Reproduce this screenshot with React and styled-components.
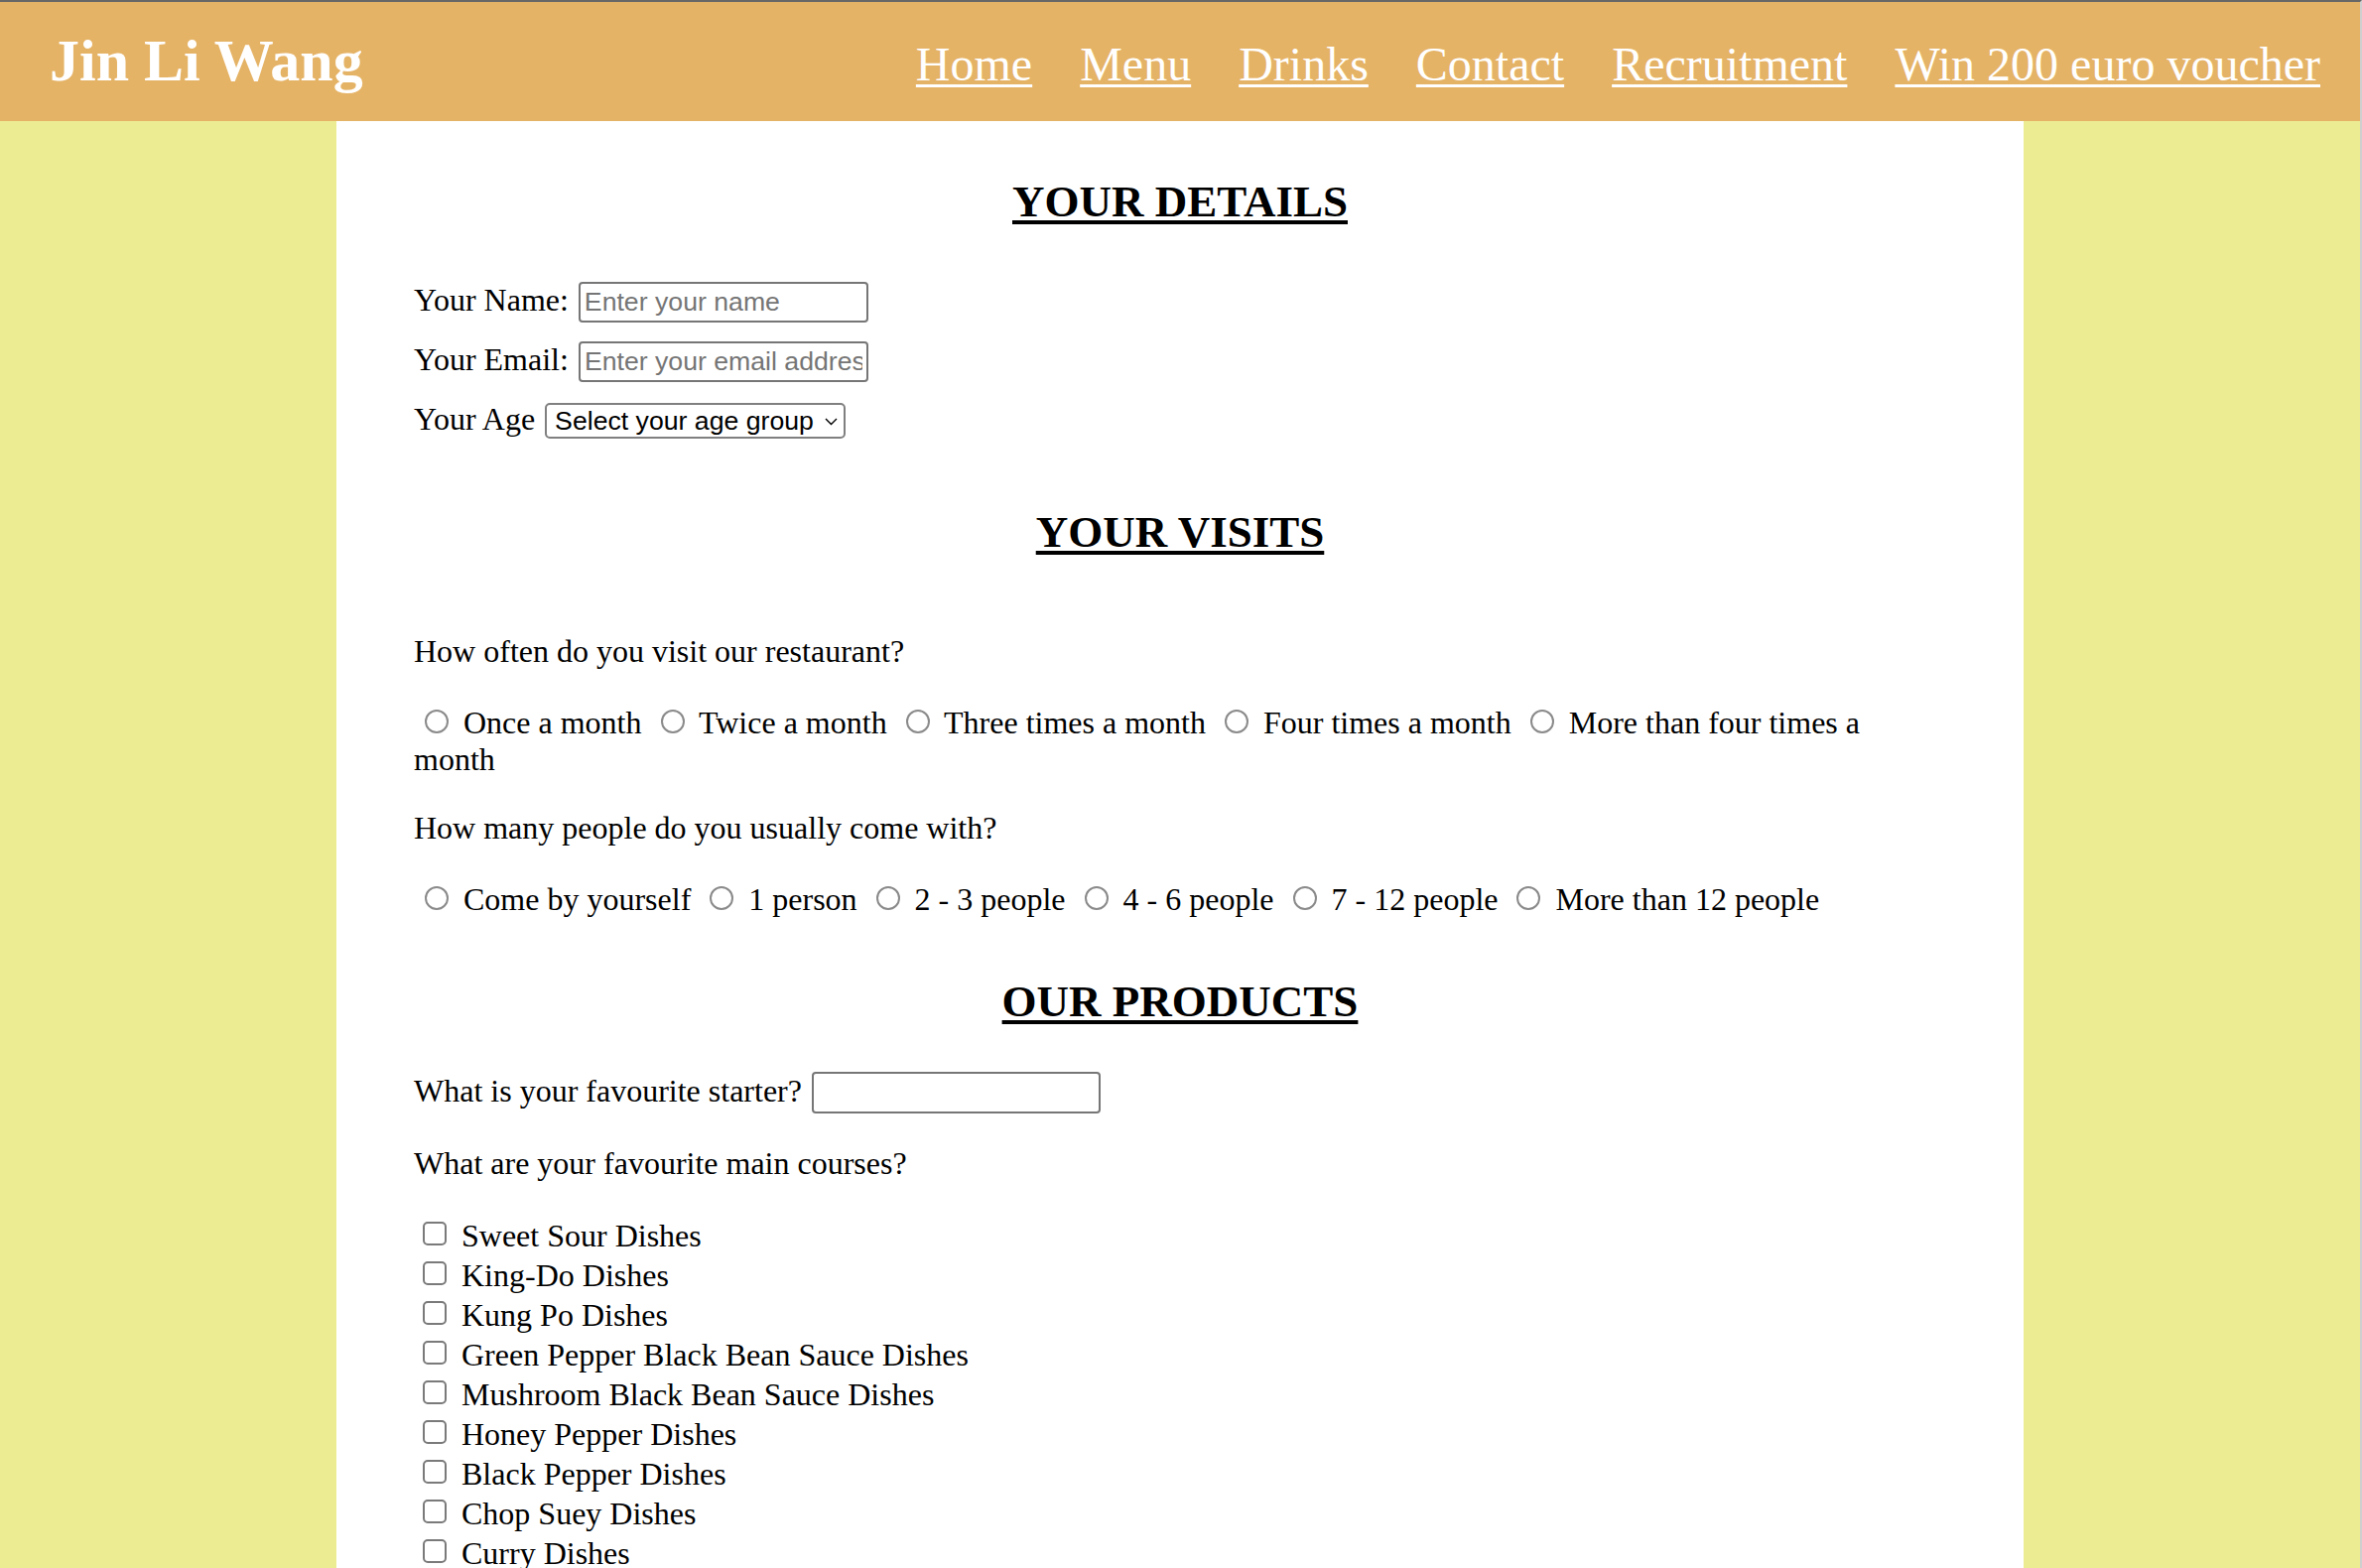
import React from "react";
import styled, { createGlobalStyle } from "styled-components";

const GlobalStyle = createGlobalStyle`
  html, body {
    margin: 0;
    padding: 0;
  }
  body {
    background: #ecec92;
    font-family: "Liberation Serif", "Times New Roman", serif;
    color: #000;
  }
`;

const Page = styled.div`
  min-height: 100vh;
  box-sizing: border-box;
  border-top: 2px solid #676767;
  border-right: 2px solid #cfcfcf;
  background: #ecec92;
`;

const Header = styled.header`
  display: flex;
  align-items: baseline;
  justify-content: space-between;
  height: 120px;
  box-sizing: border-box;
  padding: 23px 40px 0 50px;
  background: #e5b366;
`;

const Logo = styled.div`
  font-size: 60px;
  line-height: 1.2;
  font-weight: bold;
  color: #fff;
`;

const Nav = styled.nav`
  display: flex;
  align-items: baseline;
  gap: 48px;
`;

const NavLink = styled.a`
  font-size: 48px;
  line-height: 1.2;
  color: #fff;
  text-decoration: underline;
  text-decoration-thickness: 3px;
  text-underline-offset: 4px;
  cursor: pointer;
`;

const Main = styled.main`
  width: 1700px;
  min-height: calc(100vh - 122px);
  margin: 0 auto;
  padding: 55px 78px 40px;
  box-sizing: border-box;
  background: #fff;
`;

const Heading = styled.h2`
  margin: ${(p) => p.$top}px 0 ${(p) => p.$bottom}px;
  font-size: 45px;
  line-height: 52px;
  font-weight: bold;
  text-align: center;
  text-decoration: underline;
  text-decoration-thickness: 4px;
  text-underline-offset: 4px;
`;

const FieldRow = styled.div`
  display: flex;
  align-items: baseline;
  gap: 10px;
  margin-bottom: ${(p) => (p.$last ? 0 : 19)}px;
`;

const Label = styled.label`
  font-size: 32px;
  line-height: 37px;
`;

const TextInput = styled.input`
  width: ${(p) => p.$w || 292}px;
  height: ${(p) => p.$h || 41}px;
  box-sizing: border-box;
  padding: 0 4px;
  border: 2px solid #767676;
  border-radius: 4px;
  font-family: "Liberation Sans", Arial, sans-serif;
  font-size: 26.67px;
  color: #000;
  background: #fff;
  outline: none;

  &::placeholder {
    color: #757575;
  }
`;

const SelectWrap = styled.span`
  position: relative;
  display: inline-flex;
`;

const Select = styled.select`
  appearance: none;
  width: 303px;
  height: 36px;
  box-sizing: border-box;
  padding: 0 30px 0 8px;
  border: 2px solid #808080;
  border-radius: 5px;
  background: #fff;
  font-family: "Liberation Sans", Arial, sans-serif;
  font-size: 26.67px;
  color: #000;
  outline: none;
`;

const Chevron = styled.svg`
  position: absolute;
  right: 8px;
  top: 50%;
  width: 13px;
  height: 8px;
  margin-top: -3px;
  pointer-events: none;
`;

const Question = styled.p`
  margin: ${(p) => p.$top || 0}px 0 0;
  font-size: 32px;
  line-height: 37px;
`;

const Options = styled.p`
  max-width: 1500px;
  margin: 33px 0 0;
  font-size: 32px;
  line-height: 37px;
`;

const Radio = styled.input`
  appearance: none;
  display: inline-block;
  width: 24px;
  height: 24px;
  margin: 7px 7px 0 11px;
  box-sizing: border-box;
  border: 2px solid #8a8a8a;
  border-radius: 50%;
  background: #fff;
  vertical-align: baseline;
`;

const CheckList = styled.div`
  margin-top: 34px;
`;

const CheckRow = styled.div`
  display: flex;
  align-items: center;
  height: 40px;
`;

const Checkbox = styled.input`
  appearance: none;
  flex-shrink: 0;
  width: 24px;
  height: 24px;
  margin: 0 15px 4px 9px;
  box-sizing: border-box;
  border: 2px solid #7a7a7a;
  border-radius: 5px;
  background: #fff;
`;

const CheckLabel = styled.label`
  font-size: 32px;
  line-height: 40px;
`;

const links = ["Home", "Menu", "Drinks", "Contact", "Recruitment", "Win 200 euro voucher"];

const visitOptions = [
  "Once a month",
  "Twice a month",
  "Three times a month",
  "Four times a month",
  "More than four times a month",
];

const groupOptions = [
  "Come by yourself",
  "1 person",
  "2 - 3 people",
  "4 - 6 people",
  "7 - 12 people",
  "More than 12 people",
];

const dishes = [
  "Sweet Sour Dishes",
  "King-Do Dishes",
  "Kung Po Dishes",
  "Green Pepper Black Bean Sauce Dishes",
  "Mushroom Black Bean Sauce Dishes",
  "Honey Pepper Dishes",
  "Black Pepper Dishes",
  "Chop Suey Dishes",
  "Curry Dishes",
];

const RadioGroup = ({ name, options }) => (
  <Options>
    {options.map((opt, i) => (
      <React.Fragment key={opt}>
        <Radio type="radio" name={name} id={`${name}-${i}`} />{" "}
        <label htmlFor={`${name}-${i}`}>{opt}</label>{" "}
      </React.Fragment>
    ))}
  </Options>
);

const App = () => {
  return (
    <>
      <GlobalStyle />
      <Page>
        <Header>
          <Logo>Jin Li Wang</Logo>
          <Nav>
            {links.map((l) => (
              <NavLink key={l} href="#">
                {l}
              </NavLink>
            ))}
          </Nav>
        </Header>

        <Main>
          <form>
            <Heading $top={0} $bottom={55}>YOUR DETAILS</Heading>

            <FieldRow>
              <Label htmlFor="name">Your Name:</Label>
              <TextInput id="name" type="text" placeholder="Enter your name" />
            </FieldRow>
            <FieldRow>
              <Label htmlFor="email">Your Email:</Label>
              <TextInput id="email" type="email" placeholder="Enter your email address" />
            </FieldRow>
            <FieldRow $last>
              <Label htmlFor="age">Your Age</Label>
              <SelectWrap>
                <Select id="age" defaultValue="">
                  <option value="">Select your age group</option>
                  <option value="u18">Under 18</option>
                  <option value="18-25">18 - 25</option>
                  <option value="26-40">26 - 40</option>
                  <option value="41-60">41 - 60</option>
                  <option value="60+">Over 60</option>
                </Select>
                <Chevron viewBox="0 0 13 8">
                  <polyline points="1,1 6.5,6.5 12,1" fill="none" stroke="#000" strokeWidth="1.4" />
                </Chevron>
              </SelectWrap>
            </FieldRow>

            <Heading $top={68} $bottom={76}>YOUR VISITS</Heading>

            <Question>How often do you visit our restaurant?</Question>
            <RadioGroup name="visits" options={visitOptions} />

            <Question $top={32}>How many people do you usually come with?</Question>
            <RadioGroup name="group" options={groupOptions} />

            <Heading $top={58} $bottom={45}>OUR PRODUCTS</Heading>

            <FieldRow $last>
              <Label htmlFor="starter">What is your favourite starter?</Label>
              <TextInput id="starter" type="text" $w={291} $h={42} />
            </FieldRow>

            <Question $top={32}>What are your favourite main courses?</Question>
            <CheckList>
              {dishes.map((d, i) => (
                <CheckRow key={d}>
                  <Checkbox type="checkbox" id={`dish-${i}`} />
                  <CheckLabel htmlFor={`dish-${i}`}>{d}</CheckLabel>
                </CheckRow>
              ))}
            </CheckList>
          </form>
        </Main>
      </Page>
    </>
  );
};

export default App;
